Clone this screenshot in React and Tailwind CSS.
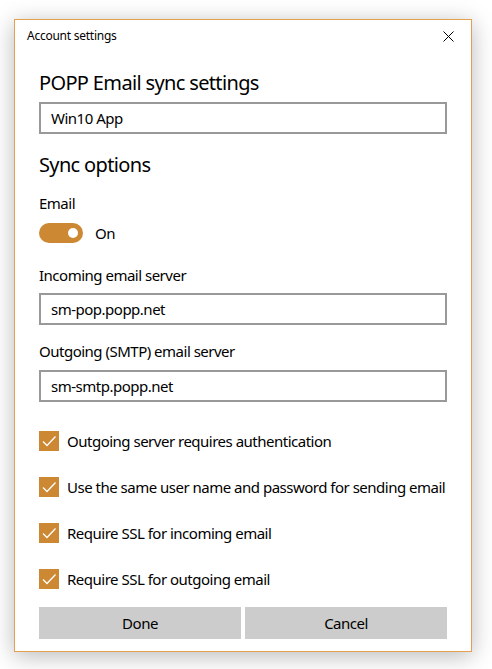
const font = { fontFamily: '"Noto Sans", "Open Sans", sans-serif' };

const Field = ({ value }) => (
  <div className="h-[32px] border-2 border-[#999999] flex items-center pl-[10px] text-[15px] tracking-[-0.5px] text-black">
    {value}
  </div>
);

const Check = ({ label }) => (
  <div className="flex items-center h-[20px]">
    <div className="w-[20px] h-[20px] bg-[#cc8833] flex items-center justify-center shrink-0">
      <svg width="20" height="20" viewBox="0 0 20 20" fill="none">
        <path d="M4 10.5 L8 14.5 L16.5 5.5" stroke="white" strokeWidth="1.3" />
      </svg>
    </div>
    <span className="ml-[8px] text-[15px] tracking-[-0.5px] text-black whitespace-nowrap">{label}</span>
  </div>
);

export default function App() {
  const checks = [
    'Outgoing server requires authentication',
    'Use the same user name and password for sending email',
    'Require SSL for incoming email',
    'Require SSL for outgoing email',
  ];

  return (
    <div className="w-[492px] h-[669px] bg-white overflow-hidden pt-[19px] pl-[14px]" style={font}>
      <div className="w-[458px] h-[633px] border border-[#e4a050] bg-white shadow-[0_4px_22px_rgba(0,0,0,0.28)] flex flex-col">
        {/* title bar */}
        <div className="h-[32px] flex items-center justify-between pl-[12px] pr-[17px]">
          <span className="text-[12px] tracking-[-0.25px] text-black">Account settings</span>
          <svg width="11" height="11" viewBox="0 0 11 11" fill="none">
            <path d="M0.5 0.5 L10.5 10.5 M10.5 0.5 L0.5 10.5" stroke="black" strokeWidth="1" />
          </svg>
        </div>

        <div className="px-[24px] flex flex-col">
          <h1 className="mt-[17px] text-[20px] leading-[28px] tracking-[-0.65px] text-black">POPP Email sync settings</h1>
          <div className="mt-[5px]">
            <Field value="Win10 App" />
          </div>

          <h2 className="mt-[17px] text-[20px] leading-[28px] tracking-[-0.65px] text-black">Sync options</h2>
          <div className="mt-[14px] text-[15px] leading-[20px] tracking-[-0.5px] text-black">Email</div>
          <div className="mt-[10px] flex items-center h-[20px]">
            <div className="w-[44px] h-[20px] rounded-full bg-[#cc8833] flex items-center justify-end pr-[5px]">
              <div className="w-[10px] h-[10px] rounded-full bg-white" />
            </div>
            <span className="ml-[12px] text-[15px] tracking-[-0.5px] text-black">On</span>
          </div>

          <div className="mt-[22px] text-[15px] leading-[20px] tracking-[-0.5px] text-black">Incoming email server</div>
          <div className="mt-[8px]">
            <Field value="sm-pop.popp.net" />
          </div>

          <div className="mt-[16px] text-[15px] leading-[20px] tracking-[-0.5px] text-black">Outgoing (SMTP) email server</div>
          <div className="mt-[9px]">
            <Field value="sm-smtp.popp.net" />
          </div>

          <div className="mt-[29px] flex flex-col gap-[26px]">
            {checks.map((c) => (
              <Check key={c} label={c} />
            ))}
          </div>

          <div className="mt-[18px] grid grid-cols-2 gap-[4px]">
            <button className="h-[32px] bg-[#cccccc] text-[15px] tracking-[-0.5px] text-black">Done</button>
            <button className="h-[32px] bg-[#cccccc] text-[15px] tracking-[-0.5px] text-black">Cancel</button>
          </div>
        </div>
      </div>
    </div>
  );
}
